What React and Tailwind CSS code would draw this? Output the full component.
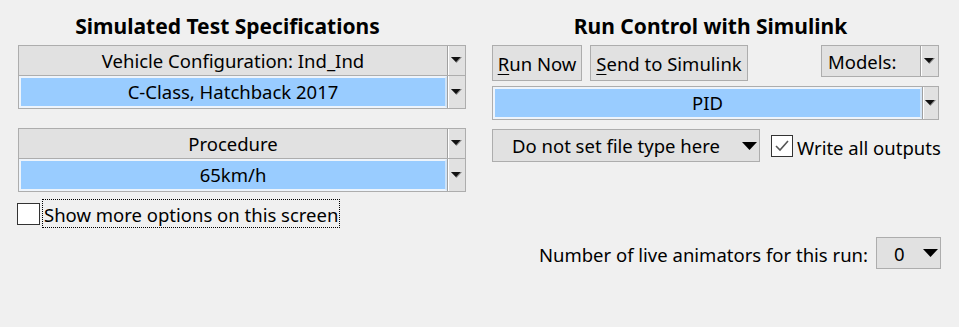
import React from "react";

const F = { fontFamily: '"Noto Sans", "Open Sans", sans-serif' };

function SwingArrow() {
  return (
    <svg width="11" height="7" viewBox="0 0 11 7">
      <polygon points="0,0 11,0 5.5,6" fill="#8a8a8a" />
      <polygon points="0,0 9.5,0 5,5" fill="#111" />
    </svg>
  );
}

function WinArrow() {
  return (
    <svg width="15" height="8" viewBox="0 0 15 8">
      <polygon points="0,0 15,0 7.5,8" fill="#000" />
    </svg>
  );
}

function ArrowCol({ w = "w-[18px]" }) {
  return (
    <div className={`${w} flex items-center justify-center border-l border-[#a0a0a0] shadow-[inset_1px_0_0_#ffffff]`}>
      <SwingArrow />
    </div>
  );
}

function Group({ top, bottom }) {
  return (
    <div className="flex flex-col border border-[#adadad] bg-[#e1e1e1] w-[448px]">
      <div className="flex h-[30px] border-b border-[#adadad]">
        <div className="flex-1 flex items-center justify-center pt-[2px] text-[18.5px] text-black leading-none">{top}</div>
        <ArrowCol />
      </div>
      <div className="flex h-[32px]">
        <div className="flex-1 flex items-center justify-center pt-[1px] text-[18.5px] text-black leading-none bg-[#99ccff] border-2 border-[#eef4fb] border-r-[#cfe3f7]">
          {bottom}
        </div>
        <ArrowCol />
      </div>
    </div>
  );
}

export default function App() {
  return (
    <div className="w-[959px] h-[327px] bg-[#f0f0f0] flex overflow-hidden text-black" style={F}>
      {/* Left column */}
      <div className="ml-[18px] w-[448px] flex flex-col">
        <div className="h-[45px] pt-[12px] pr-[29px] text-center text-[21px] leading-[28px] font-bold whitespace-nowrap">
          Simulated Test Specifications
        </div>
        <Group top="Vehicle Configuration: Ind_Ind" bottom="C-Class, Hatchback 2017" />
        <div className="mt-[19px]">
          <Group top="Procedure" bottom="65km/h" />
        </div>
        <div className="mt-[7px] -ml-[1px] flex items-center">
          <div className="w-[23px] h-[22px] bg-white border border-[#333333]" />
          <div className="ml-[2px] h-[29px] px-[1px] pt-[3px] flex items-center border border-dotted border-black text-[18.5px] leading-none whitespace-nowrap">
            Show more options on this screen
          </div>
        </div>
      </div>

      {/* Right column */}
      <div className="ml-[26px] w-[450px] flex flex-col">
        <div className="h-[45px] pt-[12px] pr-[13px] text-center text-[21px] leading-[28px] font-bold whitespace-nowrap">
          Run Control with Simulink
        </div>
        <div className="flex items-start w-[447px] h-[36px]">
          <div className="w-[90px] h-[36px] pt-[3px] bg-[#e1e1e1] border border-[#adadad] flex items-center justify-center text-[18.5px] leading-none">
            <span><span className="underline underline-offset-[3px]">R</span>un Now</span>
          </div>
          <div className="ml-[8px] w-[158px] h-[36px] pt-[3px] bg-[#e1e1e1] border border-[#adadad] flex items-center justify-center text-[18.5px] leading-none whitespace-nowrap">
            <span><span className="underline underline-offset-[3px]">S</span>end to Simulink</span>
          </div>
          <div className="ml-auto w-[118px] h-[32px] bg-[#e1e1e1] border border-[#adadad] flex">
            <div className="flex-1 flex items-center pl-[6px] pt-[2px] text-[18.5px] leading-none">Models:</div>
            <ArrowCol />
          </div>
        </div>
        <div className="mt-[5px] w-[447px] h-[34px] bg-[#e1e1e1] border border-[#adadad] flex">
          <div className="flex-1 flex items-center justify-center pt-[1px] bg-[#99ccff] border-2 border-[#eef4fb] border-r-[#cfe3f7] text-[18.5px] leading-none">
            PID
          </div>
          <ArrowCol w="w-[16px]" />
        </div>
        <div className="mt-[9px] flex items-center">
          <div className="w-[268px] h-[33px] bg-[#e1e1e1] border border-[#adadad] flex items-center pl-[19px] pr-[2px] text-[18.5px] leading-none whitespace-nowrap">
            <span className="flex-1 pt-[2px]">Do not set file type here</span>
            <span className="flex items-center"><WinArrow /></span>
          </div>
          <div className="ml-[11px] w-[22px] h-[22px] bg-white border border-[#333333] flex items-center justify-center">
            <svg width="16" height="14" viewBox="0 0 16 14">
              <polyline points="2,7 6,11 14,2" fill="none" stroke="#555" strokeWidth="1.6" />
            </svg>
          </div>
          <div className="ml-[4px] pt-[5px] text-[18.5px] leading-none whitespace-nowrap">Write all outputs</div>
        </div>
        <div className="mt-[75px] flex items-center justify-end w-[450px]">
          <div className="pt-[4px] text-[18.5px] leading-none whitespace-nowrap">Number of live animators for this run:</div>
          <div className="ml-[8px] mr-[1px] w-[65px] h-[32px] bg-[#e1e1e1] border border-[#adadad] flex items-center pl-[17px] pr-[2px] text-[18.5px] leading-none">
            <span className="flex-1 pt-[2px]">0</span>
            <WinArrow />
          </div>
        </div>
      </div>
    </div>
  );
}
